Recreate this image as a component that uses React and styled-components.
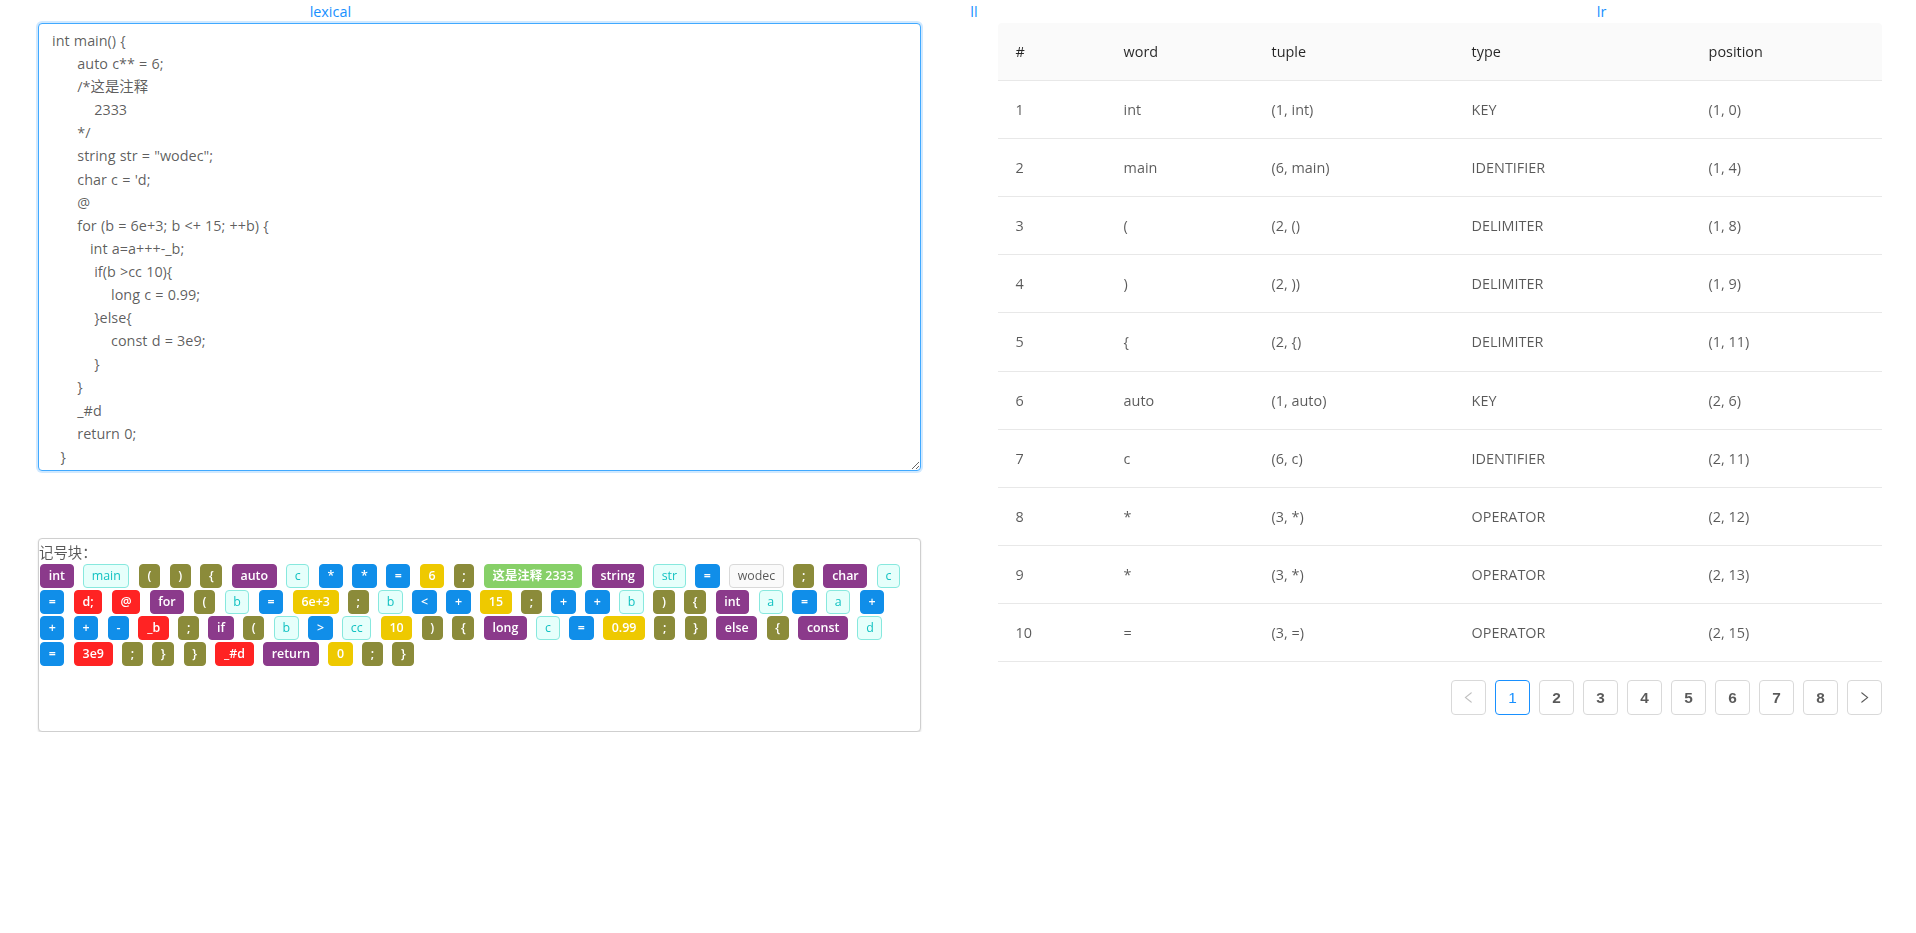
import React, { useEffect, useRef } from "react";
import styled, { createGlobalStyle } from "styled-components";

const GlobalStyle = createGlobalStyle`
  html, body { margin: 0; padding: 0; background: #fff; }
  body {
    font-family: "Open Sans", "Noto Sans CJK SC", sans-serif;
    font-size: 14.4px;
    line-height: 23.1px;
    color: rgba(0, 0, 0, 0.65);
  }
  * { box-sizing: border-box; }
`;

const CODE = `int main() {
      auto c** = 6;
      /*这是注释
          2333
      */
      string str = "wodec";
      char c = 'd;
      @
      for (b = 6e+3; b <+ 15; ++b) {
         int a=a+++-_b;
          if(b >cc 10){
              long c = 0.99;
          }else{
              const d = 3e9;
          }
      }
      _#d
      return 0;
  }`;

const TOKENS = [
  ["int", "key"], ["main", "id"], ["(", "delim"], [")", "delim"], ["{", "delim"],
  ["auto", "key"], ["c", "id"], ["*", "op"], ["*", "op"], ["=", "op"], ["6", "num"],
  [";", "delim"], ["这是注释 2333", "comment"], ["string", "key"], ["str", "id"],
  ["=", "op"], ["wodec", "str"], [";", "delim"], ["char", "key"], ["c", "id"],
  ["=", "op"], ["d;", "err"], ["@", "err"], ["for", "key"], ["(", "delim"], ["b", "id"],
  ["=", "op"], ["6e+3", "num"], [";", "delim"], ["b", "id"], ["<", "op"], ["+", "op"],
  ["15", "num"], [";", "delim"], ["+", "op"], ["+", "op"], ["b", "id"], [")", "delim"],
  ["{", "delim"], ["int", "key"], ["a", "id"], ["=", "op"], ["a", "id"], ["+", "op"],
  ["+", "op"], ["+", "op"], ["-", "op"], ["_b", "err"], [";", "delim"], ["if", "key"],
  ["(", "delim"], ["b", "id"], [">", "op"], ["cc", "id"], ["10", "num"], [")", "delim"],
  ["{", "delim"], ["long", "key"], ["c", "id"], ["=", "op"], ["0.99", "num"], [";", "delim"],
  ["}", "delim"], ["else", "key"], ["{", "delim"], ["const", "key"], ["d", "id"],
  ["=", "op"], ["3e9", "err"], [";", "delim"], ["}", "delim"], ["}", "delim"],
  ["_#d", "err"], ["return", "key"], ["0", "num"], [";", "delim"], ["}", "delim"],
];

const ROWS = [
  ["1", "int", "(1, int)", "KEY", "(1, 0)"],
  ["2", "main", "(6, main)", "IDENTIFIER", "(1, 4)"],
  ["3", "(", "(2, ()", "DELIMITER", "(1, 8)"],
  ["4", ")", "(2, ))", "DELIMITER", "(1, 9)"],
  ["5", "{", "(2, {)", "DELIMITER", "(1, 11)"],
  ["6", "auto", "(1, auto)", "KEY", "(2, 6)"],
  ["7", "c", "(6, c)", "IDENTIFIER", "(2, 11)"],
  ["8", "*", "(3, *)", "OPERATOR", "(2, 12)"],
  ["9", "*", "(3, *)", "OPERATOR", "(2, 13)"],
  ["10", "=", "(3, =)", "OPERATOR", "(2, 15)"],
];

const COLS = [
  ["#", 108], ["word", 148], ["tuple", 200], ["type", 237], ["position", null],
];

const TAG_STYLES = {
  key: { bg: "#8b3a8b", border: "#8b3a8b", fg: "#fff", w: 600 },
  delim: { bg: "#8b8b3a", border: "#8b8b3a", fg: "#fff", w: 600 },
  op: { bg: "#108ee9", border: "#108ee9", fg: "#fff", w: 600 },
  num: { bg: "#eec900", border: "#eec900", fg: "#fff", w: 600 },
  err: { bg: "#ff2323", border: "#ff2323", fg: "#fff", w: 600 },
  comment: { bg: "#87d068", border: "#87d068", fg: "#fff", w: 600 },
  id: { bg: "#e6fffb", border: "#87e8de", fg: "#13c2c2", w: 400 },
  str: { bg: "#fafafa", border: "#d9d9d9", fg: "rgba(0,0,0,0.65)", w: 400 },
};

const Page = styled.div`
  width: 1916px;
`;

const Nav = styled.nav`
  display: flex;
  justify-content: space-around;
  height: 23px;
`;

const NavLink = styled.a`
  color: #1890ff;
  text-decoration: none;
  line-height: 23px;
  cursor: pointer;
`;

const Main = styled.div`
  display: grid;
  grid-template-columns: 958px 958px;
`;

const LeftCol = styled.section`
  padding: 0 37px 0 38px;
`;

const RightCol = styled.section`
  padding: 0 34px 0 40px;
`;

const CodeArea = styled.textarea`
  display: block;
  width: 100%;
  height: 448px;
  margin: 0;
  padding: 5px 12px 3px 13px;
  font-family: inherit;
  font-size: 14.4px;
  line-height: 23.1px;
  word-spacing: 0.48px;
  color: rgba(0, 0, 0, 0.65);
  border: 1px solid #40a9ff;
  border-radius: 4px;
  box-shadow: 0 0 0 2px rgba(24, 144, 255, 0.2);
  outline: none;
  resize: vertical;
  overflow: hidden;
  white-space: pre;
`;

const TokenBox = styled.div`
  margin-top: 67px;
  min-height: 194px;
  border: 1px solid #cfcfcf;
  border-radius: 4px;
  box-shadow: 0 1px 2px rgba(0, 0, 0, 0.14);
  background: #fff;
`;

const TokenTitle = styled.div`
  line-height: 23.1px;
  padding-top: 2px;
  color: rgba(0, 0, 0, 0.65);
`;

const TokenList = styled.div`
  display: flex;
  flex-wrap: wrap;
  row-gap: 2px;
  padding-left: 1px;
`;

const Tag = styled.span`
  display: inline-block;
  height: 24px;
  line-height: 22px;
  padding: 0 7.7px;
  margin-right: 9.4px;
  font-size: 12.4px;
  font-weight: ${(p) => TAG_STYLES[p.$kind].w};
  border-radius: 4px;
  white-space: nowrap;
  background: ${(p) => TAG_STYLES[p.$kind].bg};
  border: 1px solid ${(p) => TAG_STYLES[p.$kind].border};
  color: ${(p) => TAG_STYLES[p.$kind].fg};
`;

const Table = styled.table`
  width: 100%;
  border-collapse: separate;
  border-spacing: 0;
  table-layout: fixed;
`;

const Th = styled.th`
  width: ${(p) => (p.$w ? `${p.$w}px` : "auto")};
  padding: 17px 17.6px;
  line-height: 23.1px;
  text-align: left;
  font-weight: 500;
  color: rgba(0, 0, 0, 0.85);
  background: #fafafa;
  border-bottom: 1px solid #e8e8e8;
  &:first-child { border-top-left-radius: 4px; }
  &:last-child { border-top-right-radius: 4px; }
`;

const Td = styled.td`
  padding: 17px 17.6px;
  line-height: 23.1px;
  color: rgba(0, 0, 0, 0.65);
  border-bottom: 1px solid #e8e8e8;
`;

const Pager = styled.ul`
  display: flex;
  justify-content: flex-end;
  list-style: none;
  margin: 18px 0 0;
  padding: 0;
`;

const PageItem = styled.li`
  width: 35px;
  height: 35px;
  margin-left: 9px;
  display: flex;
  align-items: center;
  justify-content: center;
  border: 1px solid ${(p) => (p.$active ? "#1890ff" : "#d9d9d9")};
  border-radius: 4px;
  background: #fff;
  font-family: "Liberation Sans", Arial, sans-serif;
  font-size: 15.4px;
  font-weight: ${(p) => (p.$active ? 400 : 700)};
  color: ${(p) => (p.$active ? "#1890ff" : "rgba(0,0,0,0.65)")};
  cursor: pointer;
  &:first-child { margin-left: 0; }
`;

const Arrow = ({ dir, disabled }) => (
  <svg width="13" height="13" viewBox="64 64 896 896" fill={disabled ? "rgba(0,0,0,0.25)" : "rgba(0,0,0,0.65)"}>
    {dir === "left" ? (
      <path d="M724 218.3V141c0-6.7-7.7-10.4-12.9-6.3L260.3 486.8a31.86 31.86 0 0 0 0 50.3l450.8 352.1c5.3 4.1 12.9.4 12.9-6.3v-77.3c0-4.9-2.3-9.6-6.1-12.6l-360-281 360-281.1c3.8-3 6.1-7.7 6.1-12.6z" />
    ) : (
      <path d="M765.7 486.8L314.9 134.7A7.97 7.97 0 0 0 302 141v77.3c0 4.9 2.3 9.6 6.1 12.6l360 281.1-360 281.1c-3.9 3-6.1 7.7-6.1 12.6V883c0 6.7 7.7 10.4 12.9 6.3l450.8-352.1a31.96 31.96 0 0 0 0-50.4z" />
    )}
  </svg>
);

export default function App() {
  const ref = useRef(null);
  useEffect(() => {
    const el = ref.current;
    if (el) {
      const pos = CODE.indexOf("_#d") + 3;
      el.focus();
      el.setSelectionRange(pos, pos);
    }
  }, []);

  return (
    <Page>
      <GlobalStyle />
      <Nav>
        <NavLink>lexical</NavLink>
        <NavLink>ll</NavLink>
        <NavLink>lr</NavLink>
      </Nav>
      <Main>
        <LeftCol>
          <CodeArea ref={ref} defaultValue={CODE} spellCheck={false} />
          <TokenBox>
            <TokenTitle>记号块：</TokenTitle>
            <TokenList>
              {TOKENS.map(([t, k], i) => (
                <Tag key={i} $kind={k}>{t}</Tag>
              ))}
            </TokenList>
          </TokenBox>
        </LeftCol>
        <RightCol>
          <Table>
            <thead>
              <tr>
                {COLS.map(([c, w]) => (
                  <Th key={c} $w={w}>{c}</Th>
                ))}
              </tr>
            </thead>
            <tbody>
              {ROWS.map((r) => (
                <tr key={r[0]}>
                  {r.map((v, i) => (
                    <Td key={i}>{v}</Td>
                  ))}
                </tr>
              ))}
            </tbody>
          </Table>
          <Pager>
            <PageItem><Arrow dir="left" disabled /></PageItem>
            {["1", "2", "3", "4", "5", "6", "7", "8"].map((n) => (
              <PageItem key={n} $active={n === "1"}>{n}</PageItem>
            ))}
            <PageItem><Arrow dir="right" /></PageItem>
          </Pager>
        </RightCol>
      </Main>
    </Page>
  );
}
